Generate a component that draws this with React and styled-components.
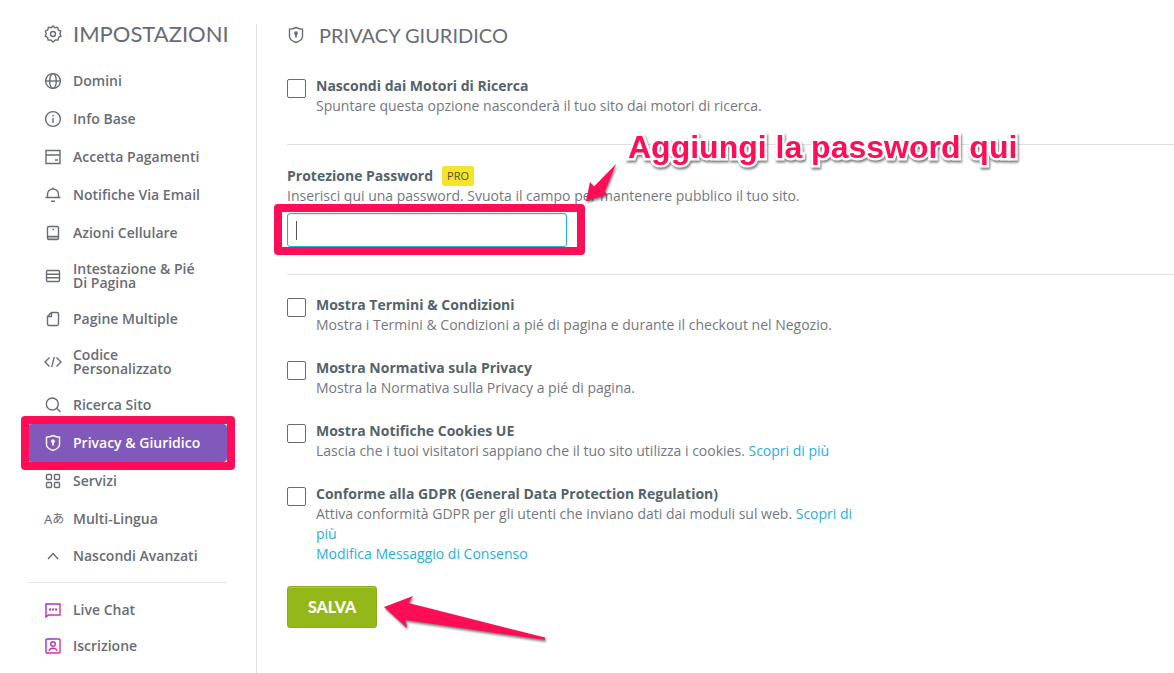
import React from "react";
import styled, { createGlobalStyle } from "styled-components";

const PINK = "#ff0d57";

const menu = [
  { icon: "globe", label: "Domini" },
  { icon: "info", label: "Info Base" },
  { icon: "card", label: "Accetta Pagamenti" },
  { icon: "bell", label: "Notifiche Via Email" },
  { icon: "phone", label: "Azioni Cellulare" },
  { icon: "rows", label: "Intestazione & Pié Di Pagina" },
  { icon: "page", label: "Pagine Multiple" },
  { icon: "code", label: "Codice Personalizzato" },
  { icon: "search", label: "Ricerca Sito" },
  { icon: "shield", label: "Privacy & Giuridico", active: true },
  { icon: "grid", label: "Servizi" },
  { icon: "lang", label: "Multi-Lingua", height: 37 },
  { icon: "up", label: "Nascondi Avanzati", height: 37 },
];

const support = [
  { icon: "chat", label: "Live Chat", height: 36 },
  { icon: "user", label: "Iscrizione", height: 36 },
];

const options = [
  {
    id: "terms",
    title: "Mostra Termini & Condizioni",
    text: "Mostra i Termini & Condizioni a pié di pagina e durante il checkout nel Negozio.",
  },
  {
    id: "privacy",
    title: "Mostra Normativa sula Privacy",
    text: "Mostra la Normativa sulla Privacy a pié di pagina.",
  },
  {
    id: "cookies",
    title: "Mostra Notifiche Cookies UE",
    text: "Lascia che i tuoi visitatori sappiano che il tuo sito utilizza i cookies.",
    more: true,
  },
  {
    id: "gdpr",
    title: "Conforme alla GDPR (General Data Protection Regulation)",
    text: "Attiva conformità GDPR per gli utenti che inviano dati dai moduli sul web.",
    more: true,
    edit: "Modifica Messaggio di Consenso",
  },
];

const shapes = {
  gear: (
    <>
      <path d="M9 .9l1.900 1.900 2.700-.4.7 2.600 2.500 1.200-.9 2.500 1.100 2.400-2.400 1.300-.5 2.700-2.700-.1L9 17.100 6.800 15l-2.700.1-.5-2.700-2.400-1.300 1.100-2.400-.9-2.500L3.700 5l.7-2.600 2.700.4z" />
      <circle cx="9" cy="9" r="2.500" />
    </>
  ),
  globe: (
    <>
      <circle cx="9" cy="9" r="7.400" />
      <ellipse cx="9" cy="9" rx="3.300" ry="7.400" />
      <path d="M1.600 9h14.800" />
    </>
  ),
  info: (
    <>
      <circle cx="9" cy="9" r="7.400" />
      <path d="M9 8v5M9 5v1.500" />
    </>
  ),
  card: <path d="M2 2.500h14v13H2zM2 7h14M11 12h3" />,
  bell: (
    <path d="M1.500 11.500h15M3.500 11.500V8.500a5.500 5.500 0 0 1 11 0v3M9 3V1.500M7 15.300h4" />
  ),
  phone: (
    <>
      <rect x="3.500" y="2.500" width="11" height="13" rx="1.500" />
      <path d="M3.500 12.500h11M8.500 5.500h1.500" />
      <path d="M4 14h10" opacity=".5" />
    </>
  ),
  rows: (
    <>
      <rect x="2.500" y="3.500" width="13" height="11" rx="1.200" />
      <path d="M2.500 7.200h13M2.500 10.800h13" />
    </>
  ),
  page: (
    <>
      <path d="M7.500 2.500h5.500a1.500 1.500 0 0 1 1.500 1.500v10a1.500 1.500 0 0 1-1.500 1.500H5A1.500 1.500 0 0 1 3.500 14V6.500z" />
      <path d="M7.500 2.500v4h-4" />
    </>
  ),
  code: (
    <path d="M5.500 4.500L1 9l4.500 4.500M12.500 4.500L17 9l-4.500 4.500M10.300 3.800L7.700 14.200" />
  ),
  search: (
    <>
      <circle cx="8.300" cy="8" r="6" />
      <path d="M12.600 12.300l3.900 3.700" />
    </>
  ),
  shield: (
    <>
      <path d="M9 1.500c2 1 4 1.600 6.500 1.600v7.400c0 2.800-3 4.700-6.500 6-3.500-1.300-6.500-3.200-6.500-6V3.100C5 3.100 7 2.500 9 1.500z" />
      <path d="M9 7v4.500" strokeWidth="1.800" />
      <circle cx="9" cy="7.200" r="1.200" fill="currentColor" />
    </>
  ),
  grid: (
    <>
      <rect x="2.500" y="2.500" width="5" height="5" rx="1" />
      <rect x="10.500" y="2.500" width="5" height="5" rx="1" />
      <rect x="2.500" y="10.500" width="5" height="5" rx="1" />
      <rect x="10.500" y="10.500" width="5" height="5" rx="1" />
    </>
  ),
  up: <path d="M4 12l5-5.500 5 5.500" />,
  chat: (
    <>
      <path d="M2 3h14v11H4.500L2 16z" />
      <path d="M5 8.500h2M8 8.500h2M11 8.500h2" strokeWidth="1.800" />
    </>
  ),
  user: (
    <>
      <rect x="2" y="2" width="14" height="14" rx="1" />
      <circle cx="9" cy="7" r="2.300" />
      <path d="M5 13.700c.8-1.800 2.200-2.400 4-2.400s3.200.6 4 2.400" />
    </>
  ),
};

const Icon = ({ name, gradient }) => {
  if (name === "lang") {
    return (
      <Lang aria-hidden="true">
        A<small>あ</small>
      </Lang>
    );
  }
  return (
    <Svg
      viewBox="0 0 18 18"
      stroke={gradient ? `url(#grad-${name})` : "currentColor"}
      aria-hidden="true"
    >
      {gradient && (
        <linearGradient
          id={`grad-${name}`}
          gradientUnits="userSpaceOnUse"
          x1="2"
          y1="2"
          x2="16"
          y2="16"
        >
          <stop offset="0" stopColor="#8a2be2" />
          <stop offset=".5" stopColor="#c42fc0" />
          <stop offset="1" stopColor="#f0307c" />
        </linearGradient>
      )}
      {shapes[name]}
    </Svg>
  );
};

const Menu = ({ items, gradient }) => (
  <List>
    {items.map((item) => (
      <li key={item.label}>
        <MenuLink href="#" $active={item.active} $height={item.height}>
          <Icon name={item.icon} gradient={gradient} />
          <span>{item.label}</span>
          {item.active && <MenuFrame />}
        </MenuLink>
      </li>
    ))}
  </List>
);

const Option = ({ id, title, text, more, edit }) => (
  <OptionRow>
    <Checkbox type="checkbox" id={id} />
    <OptionText>
      <Title htmlFor={id}>{title}</Title>
      <p>
        {text} {more && <Link href="#">Scopri di più</Link>}
      </p>
      {edit && <Link href="#">{edit}</Link>}
    </OptionText>
  </OptionRow>
);

const App = () => {
  return (
    <Page>
      <GlobalStyle />
      <Sidebar>
        <SideTitle>
          <Icon name="gear" />
          Impostazioni
        </SideTitle>
        <Menu items={menu} />
        <SideLine />
        <Menu items={support} gradient />
      </Sidebar>
      <Main>
        <MainTitle>
          <Icon name="shield" />
          Privacy Giuridico
        </MainTitle>
        <Option
          id="hide"
          title="Nascondi dai Motori di Ricerca"
          text="Spuntare questa opzione nasconderà il tuo sito dai motori di ricerca."
        />
        <PasswordSection>
          <TitleRow>
            <Title htmlFor="password">Protezione Password</Title>
            <Badge>PRO</Badge>
          </TitleRow>
          <p>
            Inserisci qui una password. Svuota il campo per mantenere pubblico
            il tuo sito.
          </p>
          <Field>
            <Input id="password" type="text" />
            <Caret />
            <FieldFrame />
          </Field>
          <Note>Aggiungi la password qui</Note>
          <ShortArrow viewBox="0 0 36 44" aria-hidden="true">
            <path d="M2 39L6 20l4 4.500L32 2 21 29l1 4z" />
          </ShortArrow>
        </PasswordSection>
        <Options>
          {options.map((option) => (
            <Option key={option.id} {...option} />
          ))}
        </Options>
        <Actions>
          <SaveButton type="button">SALVA</SaveButton>
          <LongArrow viewBox="0 0 170 52" aria-hidden="true">
            <path d="M2 14L31 3l-4.500 7L163 44.500v2.500L23.500 27l1.500 8z" />
          </LongArrow>
        </Actions>
      </Main>
    </Page>
  );
};

const GlobalStyle = createGlobalStyle`
  * {
    box-sizing: border-box;
  }
  body {
    margin: 0;
    background: #fff;
    color: #74777f;
    font-family: "Open Sans", sans-serif;
    font-size: 14px;
    line-height: 20px;
    overflow-x: hidden;
  }
  h1, h2, p, ul {
    margin: 0;
    padding: 0;
  }
`;

const Page = styled.div`
  display: flex;
  min-height: 100vh;
  padding-top: 24px;
`;

const Sidebar = styled.nav`
  flex: none;
  width: 257px;
  padding: 0 29px 0 28px;
  border-right: 1px solid #dfe0e2;
  color: #676c76;
`;

const SideTitle = styled.h1`
  display: flex;
  align-items: center;
  gap: 11px;
  height: 20px;
  margin-bottom: 18px;
  padding-left: 16px;
  font-family: Lato, sans-serif;
  font-size: 22px;
  font-weight: 400;
  text-transform: uppercase;
`;

const List = styled.ul`
  list-style: none;
`;

const MenuLink = styled.a`
  position: relative;
  display: flex;
  align-items: center;
  gap: 11px;
  min-height: ${({ $height }) => $height || 38}px;
  padding: 10px 16px;
  border-radius: 4px;
  background: ${({ $active }) => ($active ? "#8159ba" : "none")};
  color: ${({ $active }) => ($active ? "#fff" : "inherit")};
  font-weight: 600;
  line-height: 14px;
  text-decoration: none;
`;

const Frame = styled.span`
  position: absolute;
  border: 8px solid ${PINK};
  border-radius: 4px;
  pointer-events: none;
`;

const MenuFrame = styled(Frame)`
  inset: -8px -8px -8px -7px;
`;

const SideLine = styled.hr`
  height: 1px;
  margin: 8px 0 9px;
  border: 0;
  background: #e8e8ea;
`;

const Svg = styled.svg`
  flex: none;
  width: 18px;
  height: 18px;
  margin: -1px 0;
  fill: none;
  stroke-width: 1.4;
`;

const Lang = styled.span`
  flex: none;
  display: flex;
  align-items: center;
  width: 18px;
  font-family: "Noto Sans", "Noto Sans CJK JP", sans-serif;
  font-size: 13px;
  font-weight: 400;
  small {
    font-size: 12px;
  }
`;

const Main = styled.main`
  flex: 1;
  min-width: 0;
  padding-left: 30px;
`;

const MainTitle = styled.h2`
  display: flex;
  align-items: center;
  gap: 14px;
  height: 22px;
  margin-bottom: 30px;
  color: #676c76;
  font-family: Lato, sans-serif;
  font-size: 20px;
  font-weight: 400;
  text-transform: uppercase;
`;

const OptionRow = styled.div`
  display: flex;
  align-items: flex-start;
  gap: 10px;
`;

const Checkbox = styled.input`
  appearance: none;
  flex: none;
  width: 19px;
  height: 19px;
  margin: 3px 0 0;
  border: 1px solid #6b6b6b;
  border-radius: 2px;
  background: #fff;
`;

const OptionText = styled.div`
  max-width: 545px;
`;

const Title = styled.label`
  display: block;
  color: #53636b;
  font-weight: 700;
`;

const Link = styled.a`
  color: #1fb0e4;
  text-decoration: none;
`;

const PasswordSection = styled.section`
  position: relative;
  margin: 28px 0 20px;
  padding: 20px 0 27px;
  border: solid #dfe0e2;
  border-width: 1px 0;
`;

const TitleRow = styled.div`
  display: flex;
  align-items: center;
  gap: 9px;
  height: 21px;
`;

const Badge = styled.span`
  padding: 0 5px;
  border-radius: 2px;
  background: #f5e32c;
  color: #55502a;
  font-size: 11px;
  font-weight: 500;
`;

const Field = styled.div`
  position: relative;
  width: 280px;
  margin-top: 7px;
`;

const Input = styled.input`
  display: block;
  width: 100%;
  height: 34px;
  padding: 0 8px;
  border: 1px solid #1fb0e4;
  border-radius: 3px;
  outline: 0;
  box-shadow: inset 0 1px 2px #e4e4e4;
  font: inherit;
  caret-color: transparent;
`;

const Caret = styled.span`
  position: absolute;
  top: 8px;
  left: 9px;
  width: 1px;
  height: 19px;
  background: #53565e;
`;

const FieldFrame = styled(Frame)`
  inset: -9px -18px -8px -13px;
`;

const Note = styled.strong`
  position: absolute;
  top: -16px;
  left: 341px;
  color: ${PINK};
  font-family: "Liberation Sans", Arial, sans-serif;
  font-size: 32px;
  line-height: 36px;
  white-space: nowrap;
  paint-order: stroke fill;
  -webkit-text-stroke: 5px #fff;
  filter: drop-shadow(1px 2px 1px rgba(0, 0, 0, 0.5));
`;

const Arrow = styled.svg`
  position: absolute;
  fill: ${PINK};
  filter: drop-shadow(1px 2px 1px rgba(0, 0, 0, 0.5));
  pointer-events: none;
`;

const ShortArrow = styled(Arrow)`
  top: 17px;
  left: 297px;
  width: 36px;
  height: 44px;
`;

const LongArrow = styled(Arrow)`
  top: 7px;
  left: 95px;
  width: 170px;
  height: 52px;
`;

const Options = styled.div`
  display: flex;
  flex-direction: column;
  gap: 23px;
`;

const Actions = styled.div`
  position: relative;
  margin: 22px 0 40px;
`;

const SaveButton = styled.button`
  display: block;
  height: 42px;
  padding: 0 20px 2px;
  border: 1px solid #8aad18;
  border-radius: 3px;
  background: #94b81a;
  box-shadow: inset 0 1px 0 #aac94a;
  color: #fff;
  font-family: Lato, sans-serif;
  font-size: 16px;
  font-weight: 900;
`;

export default App;
